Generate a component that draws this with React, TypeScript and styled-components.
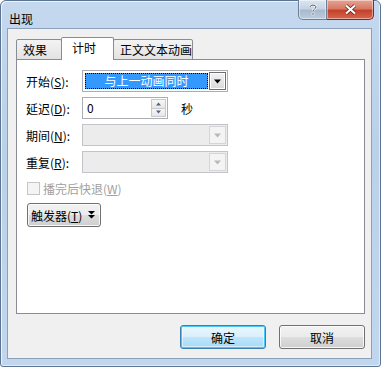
import React from "react";
import styled, { createGlobalStyle } from "styled-components";

const GlobalStyle = createGlobalStyle`
  html, body {
    margin: 0;
    padding: 0;
    background: #ffffff;
  }
  body {
    font-family: "Noto Sans CJK SC", "Liberation Sans", sans-serif;
    font-size: 12px;
    color: #000;
  }
`;

const Window = styled.div`
  box-sizing: border-box;
  width: 381px;
  height: 367px;
  display: flex;
  flex-direction: column;
  border: 1px solid #5c7592;
  border-radius: 6px 6px 3px 3px;
  background: linear-gradient(to bottom, #c4d8ee 0%, #bad1ea 40%, #c2d7ee 100%);
  box-shadow: inset 1px 1px 0 rgba(255, 255, 255, 0.7), inset -1px -1px 0 rgba(255, 255, 255, 0.5);
  padding: 0 8px 7px 6px;
`;

const TitleBar = styled.div`
  height: 27px;
  display: flex;
  align-items: flex-start;
  flex-shrink: 0;
`;

const Title = styled.div`
  flex: 1;
  padding: 10px 0 0 2px;
  font-size: 12px;
  line-height: 16px;
  color: #000;
`;

const CaptionButtons = styled.div`
  display: flex;
  margin-top: -1px;
  margin-right: -2px;
`;

const CaptionButton = styled.div<{ $close?: boolean }>`
  box-sizing: border-box;
  width: ${(p) => (p.$close ? "47px" : "29px")};
  height: 20px;
  display: flex;
  align-items: center;
  justify-content: center;
  border: 1px solid ${(p) => (p.$close ? "#7a2b24" : "#6d7f95")};
  border-top: none;
  border-left: ${(p) => (p.$close ? "none" : undefined)};
  border-radius: ${(p) => (p.$close ? "0 0 5px 0" : "0 0 0 5px")};
  background: ${(p) =>
    p.$close
      ? "linear-gradient(to bottom, #e8a493 0%, #d67a66 45%, #c4422c 55%, #d8654c 100%)"
      : "linear-gradient(to bottom, #dce6f1 0%, #c5d3e3 45%, #a8bad0 55%, #bccbdc 100%)"};
  box-shadow: inset 0 0 0 1px rgba(255, 255, 255, 0.45);
`;

const Client = styled.div`
  flex: 1;
  display: flex;
  flex-direction: column;
  border: 1px solid #8ba0b9;
  background: #f0f0f0;
  padding: 8px 6px 7px 8px;
`;

const Tabs = styled.div`
  display: flex;
  align-items: flex-end;
  height: 23px;
  margin-bottom: -1px;
  position: relative;
  z-index: 1;
`;

const Tab = styled.div<{ $active?: boolean; $w: number }>`
  box-sizing: border-box;
  width: ${(p) => p.$w}px;
  height: ${(p) => (p.$active ? "23px" : "21px")};
  margin: ${(p) => (p.$active ? "0 -1px" : "0")};
  border: 1px solid #898c95;
  border-bottom: ${(p) => (p.$active ? "none" : "1px solid #898c95")};
  border-radius: 2px 2px 0 0;
  background: ${(p) => (p.$active ? "#ffffff" : "linear-gradient(to bottom, #f3f3f3, #e3e3e3)")};
  padding: ${(p) => (p.$active ? "1px 0 0 10px" : "1px 0 0 6px")};
  line-height: 17px;
  font-size: 12px;
  position: relative;
  z-index: ${(p) => (p.$active ? 2 : 1)};
`;

const Panel = styled.div`
  box-sizing: border-box;
  height: 255px;
  border: 1px solid #898c95;
  background: #ffffff;
  padding: 10px 0 0 9px;
  display: flex;
  flex-direction: column;
`;

const Row = styled.div`
  display: flex;
  align-items: center;
  height: 22px;
  margin-bottom: 5px;
`;

const Label = styled.div<{ $disabled?: boolean }>`
  width: 56px;
  flex-shrink: 0;
  font-size: 12px;
  color: ${(p) => (p.$disabled ? "#000" : "#000")};
`;

const U = styled.span`
  text-decoration: underline;
`;

const Combo = styled.div<{ $disabled?: boolean }>`
  box-sizing: border-box;
  width: 146px;
  height: 22px;
  display: flex;
  border: 1px solid ${(p) => (p.$disabled ? "#c2c4c8" : "#abadb3")};
  background: ${(p) => (p.$disabled ? "#ececec" : "#ffffff")};
  padding: 1px;
`;

const ComboValue = styled.div`
  flex: 1;
  box-sizing: border-box;
  margin: 1px 1px 1px 1px;
  background: #3399ff;
  border: 1px dotted #000;
  color: #ffffff;
  text-align: center;
  line-height: 14px;
  font-size: 12px;
`;

const ComboEmpty = styled.div`
  flex: 1;
`;

const DropButton = styled.div<{ $disabled?: boolean }>`
  box-sizing: border-box;
  width: 17px;
  height: 18px;
  display: flex;
  align-items: center;
  justify-content: center;
  border: 1px solid ${(p) => (p.$disabled ? "#d4d5d8" : "#6f6f6f")};
  background: ${(p) => (p.$disabled ? "#f4f4f4" : "linear-gradient(to bottom, #f2f2f2, #d9d9d9)")};
  box-shadow: ${(p) => (p.$disabled ? "none" : "inset 0 0 0 1px #ffffff")};
`;

const SpinBox = styled.div`
  box-sizing: border-box;
  width: 86px;
  height: 22px;
  display: flex;
  border: 1px solid #abadb3;
  background: #ffffff;
  padding: 1px 1px 1px 4px;
`;

const SpinText = styled.div`
  flex: 1;
  line-height: 18px;
  font-size: 12px;
`;

const SpinButtons = styled.div`
  width: 15px;
  display: flex;
  flex-direction: column;
`;

const SpinHalf = styled.div`
  flex: 1;
  box-sizing: border-box;
  display: flex;
  align-items: center;
  justify-content: center;
  border: 1px solid #c9c9c9;
  background: linear-gradient(to bottom, #f7f7f7, #e6e6e6);
  & + & {
    margin-top: -1px;
  }
`;

const Unit = styled.div`
  margin-left: 13px;
  font-size: 12px;
`;

const CheckRow = styled.div`
  display: flex;
  align-items: center;
  height: 16px;
  margin: 2px 0 0 1px;
  color: #a0a0a0;
  font-size: 12px;
`;

const CheckBox = styled.div`
  box-sizing: border-box;
  width: 13px;
  height: 13px;
  border: 1px solid #c6c6c6;
  background: #f4f4f4;
  margin-right: 3px;
`;

const TriggerButton = styled.div`
  box-sizing: border-box;
  width: 74px;
  height: 24px;
  margin: 7px 0 0 1px;
  display: flex;
  align-items: center;
  padding-left: 3px;
  border: 1px solid #707070;
  border-radius: 3px;
  background: linear-gradient(to bottom, #f2f2f2 0%, #ebebeb 50%, #dddddd 51%, #cfcfcf 100%);
  box-shadow: inset 0 0 0 1px rgba(255, 255, 255, 0.8);
  font-size: 12px;
  gap: 6px;
`;

const Footer = styled.div`
  display: flex;
  justify-content: flex-end;
  gap: 13px;
  margin-top: 11px;
`;

const Button = styled.div<{ $default?: boolean }>`
  box-sizing: border-box;
  width: 86px;
  height: 24px;
  display: flex;
  align-items: center;
  justify-content: center;
  border: 1px solid ${(p) => (p.$default ? "#3c7fb1" : "#707070")};
  border-radius: 3px;
  background: ${(p) =>
    p.$default
      ? "linear-gradient(to bottom, #eaf6fd 0%, #d9f0fc 50%, #bee6fd 51%, #a7d9f5 100%)"
      : "linear-gradient(to bottom, #f2f2f2 0%, #ebebeb 50%, #dddddd 51%, #cfcfcf 100%)"};
  box-shadow: ${(p) =>
    p.$default ? "inset 0 0 0 1px #48c8f5, inset 0 0 0 2px rgba(255,255,255,0.5)" : "inset 0 0 0 1px rgba(255,255,255,0.8)"};
  font-size: 12px;
`;

const Arrow: React.FC<{ color: string; up?: boolean; size?: number }> = ({ color, up, size = 7 }) => (
  <svg width={size} height={Math.ceil(size / 2) + 1} viewBox="0 0 7 4">
    <path d={up ? "M0 4 L3.5 0 L7 4 Z" : "M0 0 L7 0 L3.5 4 Z"} fill={color} />
  </svg>
);

const DoubleArrow = () => (
  <svg width="7" height="8" viewBox="0 0 7 8">
    <path d="M0 0 L7 0 L3.5 3.5 Z M0 4 L7 4 L3.5 7.5 Z" fill="#000" />
  </svg>
);

const App: React.FC = () => {
  return (
    <>
      <GlobalStyle />
      <Window>
        <TitleBar>
          <Title>出现</Title>
          <CaptionButtons>
            <CaptionButton>
              <svg width="10" height="13" viewBox="0 0 10 13">
                <path
                  d="M2 4 C2 1.5 8 1.5 8 4 C8 6 5 6 5 8.5"
                  stroke="#ffffff"
                  strokeWidth="2.2"
                  fill="none"
                />
                <path d="M2 4 C2 1.5 8 1.5 8 4 C8 6 5 6 5 8.5" stroke="#44546a" strokeWidth="1" fill="none" />
                <rect x="4" y="10" width="2" height="2" fill="#44546a" stroke="#fff" strokeWidth="0.6" />
              </svg>
            </CaptionButton>
            <CaptionButton $close>
              <svg width="13" height="11" viewBox="0 0 13 11">
                <path d="M2 1.5 L11 9.5 M11 1.5 L2 9.5" stroke="#5a1a12" strokeWidth="3.6" />
                <path d="M2 1.5 L11 9.5 M11 1.5 L2 9.5" stroke="#ffffff" strokeWidth="2.2" />
              </svg>
            </CaptionButton>
          </CaptionButtons>
        </TitleBar>
        <Client>
          <Tabs>
            <Tab $w={46}>效果</Tab>
            <Tab $w={53} $active>
              计时
            </Tab>
            <Tab $w={80}>正文文本动画</Tab>
          </Tabs>
          <Panel>
            <Row>
              <Label>
                开始(<U>S</U>):
              </Label>
              <Combo>
                <ComboValue>与上一动画同时</ComboValue>
                <DropButton>
                  <Arrow color="#000" />
                </DropButton>
              </Combo>
            </Row>
            <Row>
              <Label>
                延迟(<U>D</U>):
              </Label>
              <SpinBox>
                <SpinText>0</SpinText>
                <SpinButtons>
                  <SpinHalf>
                    <Arrow color="#4d6185" up size={5} />
                  </SpinHalf>
                  <SpinHalf>
                    <Arrow color="#4d6185" size={5} />
                  </SpinHalf>
                </SpinButtons>
              </SpinBox>
              <Unit>秒</Unit>
            </Row>
            <Row>
              <Label>
                期间(<U>N</U>):
              </Label>
              <Combo $disabled>
                <ComboEmpty />
                <DropButton $disabled>
                  <Arrow color="#b8b8b8" />
                </DropButton>
              </Combo>
            </Row>
            <Row>
              <Label>
                重复(<U>R</U>):
              </Label>
              <Combo $disabled>
                <ComboEmpty />
                <DropButton $disabled>
                  <Arrow color="#b8b8b8" />
                </DropButton>
              </Combo>
            </Row>
            <CheckRow>
              <CheckBox />
              播完后快退(<U>W</U>)
            </CheckRow>
            <TriggerButton>
              <span>
                触发器(<U>T</U>)
              </span>
              <DoubleArrow />
            </TriggerButton>
          </Panel>
          <Footer>
            <Button $default>确定</Button>
            <Button>取消</Button>
          </Footer>
        </Client>
      </Window>
    </>
  );
};

export default App;
